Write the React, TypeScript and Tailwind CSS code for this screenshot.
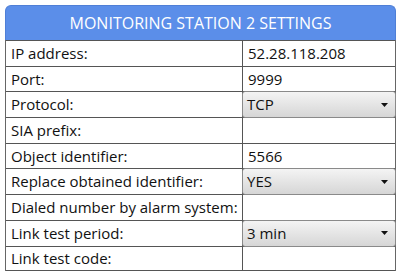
import React from 'react';

type Row = { label: string; value?: string; select?: boolean };

const rows: Row[] = [
  { label: 'IP address:', value: '52.28.118.208' },
  { label: 'Port:', value: '9999' },
  { label: 'Protocol:', value: 'TCP', select: true },
  { label: 'SIA prefix:', value: '' },
  { label: 'Object identifier:', value: '5566' },
  { label: 'Replace obtained identifier:', value: 'YES', select: true },
  { label: 'Dialed number by alarm system:', value: '' },
  { label: 'Link test period:', value: '3 min', select: true },
  { label: 'Link test code:', value: '' },
];

function SelectBox({ value }: { value: string }) {
  return (
    <div className="mx-[-1px] h-[27px] my-[-1px] flex items-center justify-between rounded-[3px] border border-[#8a8a8a] bg-gradient-to-b from-[#f4f4f4] to-[#d6d6d6] pl-[4px] pr-[7px]">
      <span className="text-[#111]">{value}</span>
      <svg width="7" height="4" viewBox="0 0 7 4">
        <path d="M0 0 L7 0 L3.5 4 Z" fill="#111" />
      </svg>
    </div>
  );
}

export default function App() {
  return (
    <div className="w-[400px] h-[276px] bg-white pt-[5px] pl-[5px]" style={{ fontFamily: '"Open Sans", sans-serif' }}>
      <div className="w-[391px]">
        <div className="h-[35px] rounded-t-[6px] bg-[#5b8ee9] flex items-center justify-center text-white text-[16px] border border-[#4f7fd6] border-b-0">
          MONITORING STATION 2 SETTINGS
        </div>
        <div className="border-l border-r border-[#666]">
          {rows.map((r, i) => (
            <div key={i} className="flex h-[25.7px] border-t border-[#555] last:border-b text-[15px] text-[#111] leading-none">
              <div className="w-[237px] pl-[5px] flex items-center border-r border-[#555]">{r.label}</div>
              <div className="flex-1 flex items-center">
                {r.select ? (
                  <div className="w-full self-stretch"><SelectBox value={r.value!} /></div>
                ) : (
                  <span className="pl-[5px]">{r.value}</span>
                )}
              </div>
            </div>
          ))}
        </div>
      </div>
    </div>
  );
}
